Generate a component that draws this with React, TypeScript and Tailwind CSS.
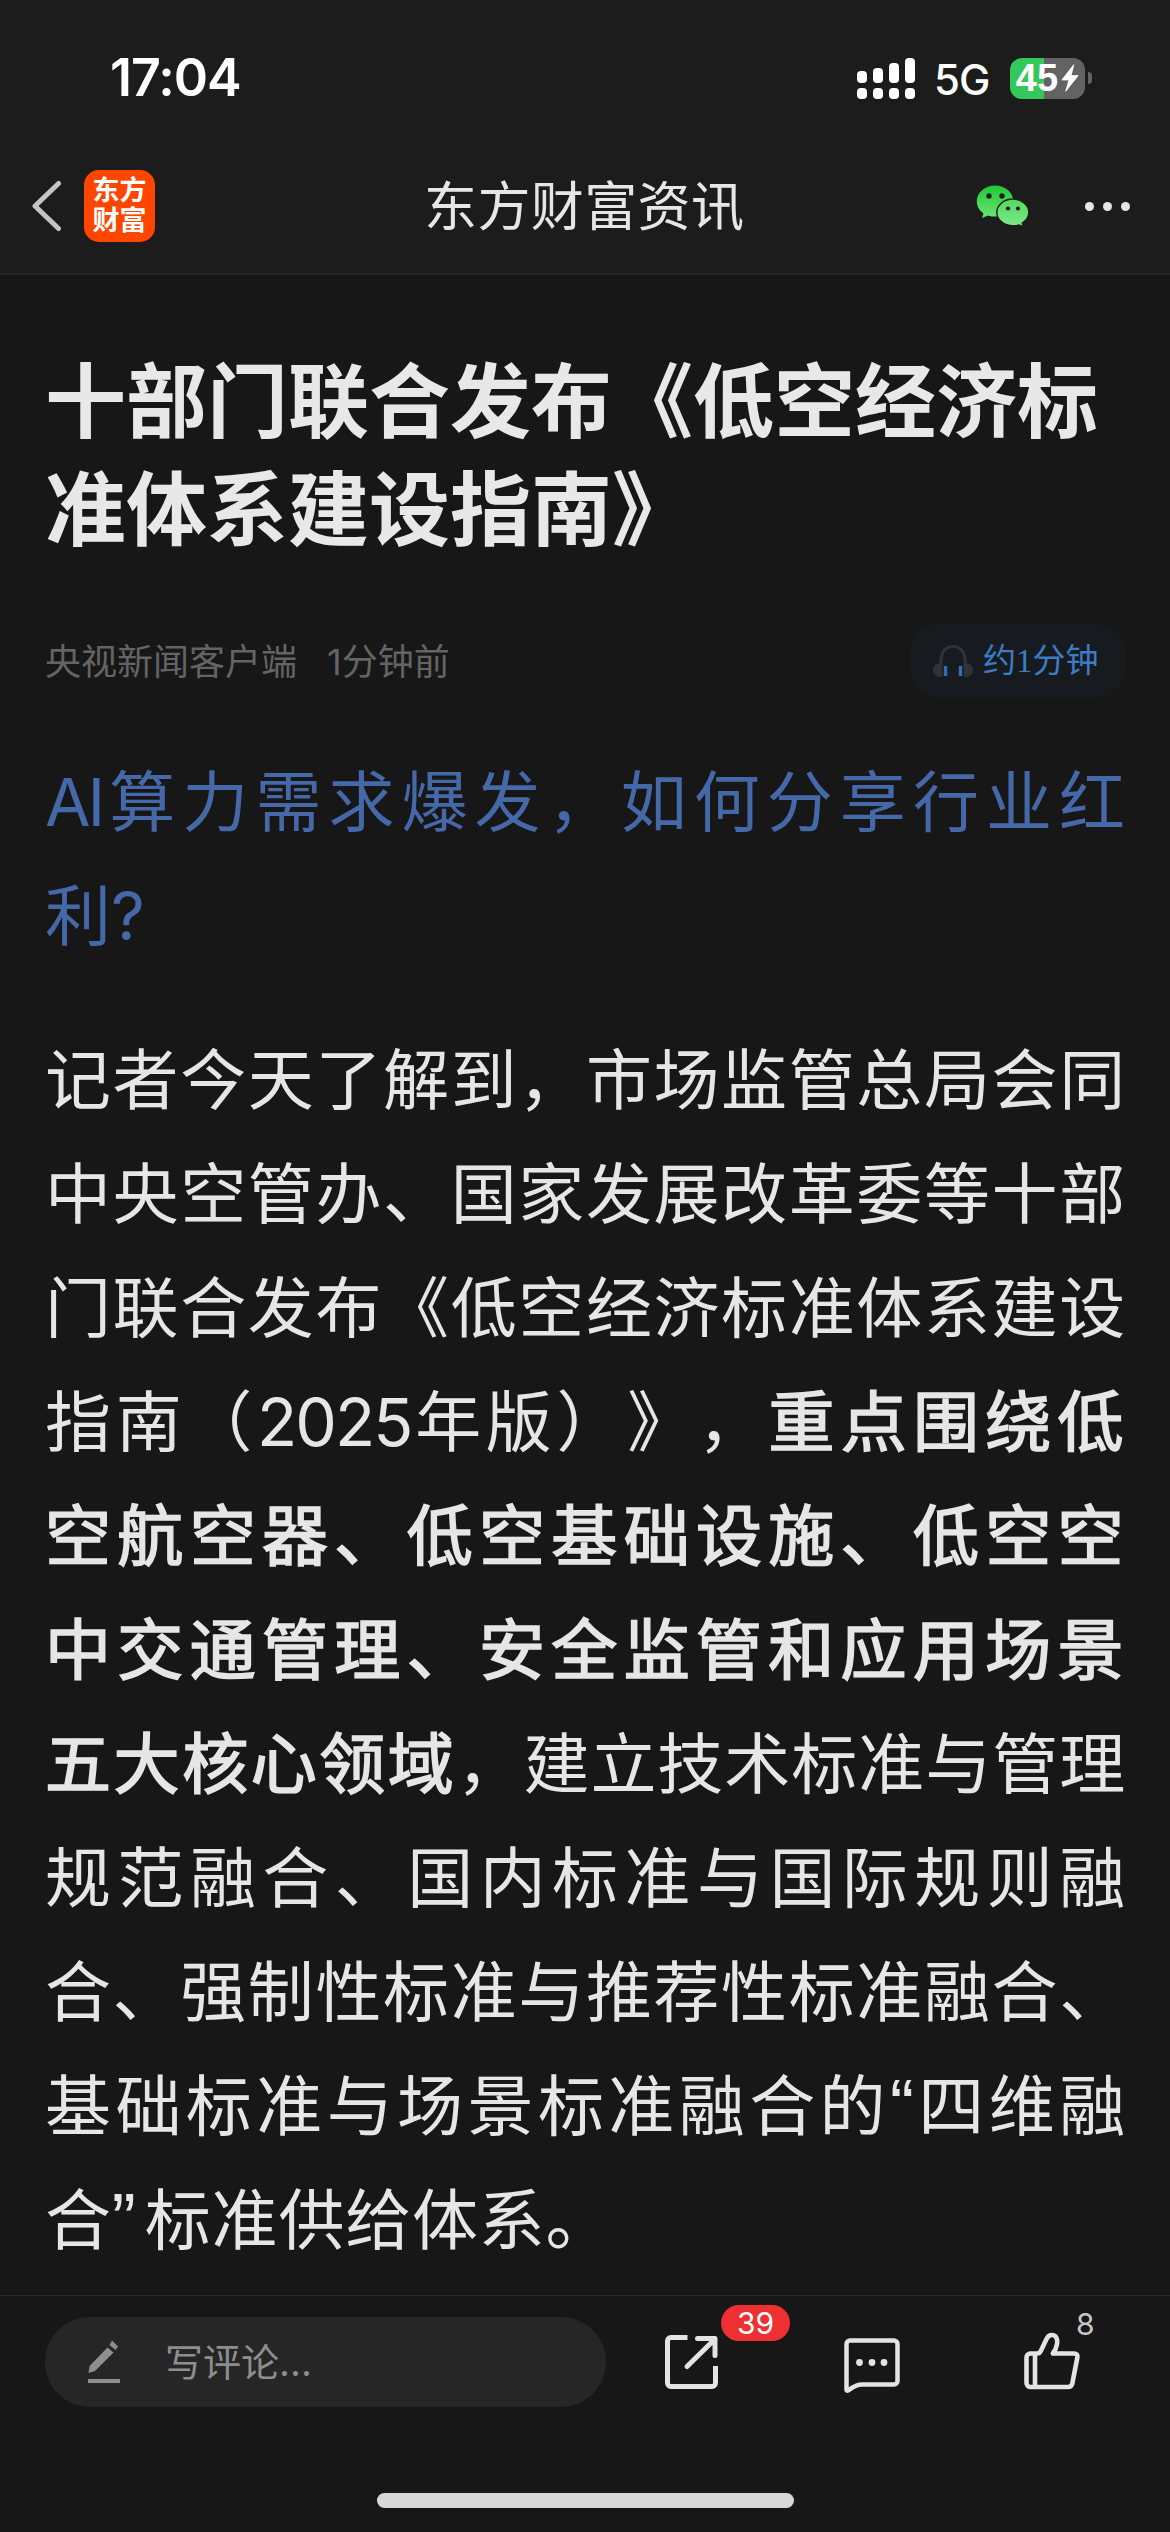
import { clsx } from 'clsx'

const SIGNAL = ['h-3', 'h-[15px]', 'h-5', 'h-[25px]']

type Run = { t: string; b?: boolean; className?: string }

const LEAD: Run[][] = [
  [{ t: 'AI', className: 'tracking-[-3px]' }, { t: '算力需求爆发，如何分享行业红' }],
  [{ t: '利?' }],
]

const QUOTE = "font-['Liberation_Sans','Noto_Sans_CJK_SC',sans-serif] text-[72px] leading-none"

// `b` runs are the emphasised part of the article
const BODY: Run[][] = [
  [{ t: '记者今天了解到，市场监管总局会同' }],
  [{ t: '中央空管办、国家发展改革委等十部' }],
  [{ t: '门联合发布《低空经济标准体系建设' }],
  [{ t: '指南（' }, { t: '2025', className: 'tracking-[-2px]' }, { t: '年版）》，' }, { t: '重点围绕低', b: true }],
  [{ t: '空航空器、低空基础设施、低空空', b: true }],
  [{ t: '中交通管理、安全监管和应用场景', b: true }],
  [{ t: '五大核心领域', b: true }, { t: '，建立技术标准与管理' }],
  [{ t: '规范融合、国内标准与国际规则融' }],
  [{ t: '合、强制性标准与推荐性标准融合、' }],
  [{ t: '基础标准与场景标准融合的' }, { t: '“', className: QUOTE }, { t: '四维融' }],
  [{ t: '合' }, { t: '”', className: clsx(QUOTE, 'tracking-[9px]') }, { t: '标准供给体系。' }],
]

function StatusBar() {
  return (
    <div className="h-[138px] pl-[110px] pr-[78px] pt-[48px] flex items-start justify-between text-white">
      <span className="text-[52px] leading-[60px] font-semibold tracking-[-1px]">17:04</span>
      <div className="flex items-center h-[60px]">
        <div className="flex items-end gap-1.5">
          {SIGNAL.map((h) => (
            <div key={h} className="flex flex-col gap-[5px]">
              <span className={clsx('w-2.5 rounded-[4px] bg-white', h)} />
              <span className="w-2.5 h-[11px] rounded-[4px] bg-white" />
            </div>
          ))}
        </div>
        <span className="ml-[19px] w-[56px] text-[42px] leading-none font-medium tracking-[-1px] pt-[3px]">5G</span>
        <div className="ml-[20px] w-[75px] h-[41px] rounded-[12px] bg-linear-to-r from-[#34c759] from-[46%] to-[#636363] to-[46%] flex items-center justify-center gap-[3px]">
          <span className="text-[38px] leading-[41px] font-bold font-['Liberation_Sans',sans-serif]">45</span>
          <svg width="18" height="30" viewBox="0 0 19 30" fill="white" stroke="white" strokeLinejoin="round">
            <path d="M13.500 1 1 17h7.500L5 29 18 12.500h-7.500z" />
          </svg>
        </div>
        <span className="ml-[3px] w-1 h-3 rounded-r-full bg-[#636363]" />
      </div>
    </div>
  )
}

function WeChatIcon() {
  return (
    <svg width="54" height="42" viewBox="0 0 54 42">
      <defs>
        <linearGradient id="wcBack" x1="0" y1="0" x2="0" y2="1">
          <stop offset="0" stopColor="#20c832" />
          <stop offset="1" stopColor="#6be477" />
        </linearGradient>
        <linearGradient id="wcFront" x1="0" y1="0" x2="0" y2="1">
          <stop offset="0" stopColor="#52d95f" />
          <stop offset="1" stopColor="#7fe888" />
        </linearGradient>
      </defs>
      <path
        d="M19 0.500C8.800 0.500 0.800 7.700 0.800 16.500c0 5 2.600 9 6.700 11.900L6 33l6-2.600c2.200.8 4.600 1.200 7 1.200 10.200 0 18.300-6.800 18.300-15.400S29.200.500 19 .500z"
        fill="url(#wcBack)"
      />
      <circle cx="13" cy="11" r="2.700" fill="#1c1c1c" />
      <circle cx="26" cy="11" r="2.700" fill="#1c1c1c" />
      <path
        d="M37 14c-8.900 0-16.200 6-16.200 13.400s7.200 13.400 16.200 13.400c2.100 0 4.200-.3 6-.9l4.500 2.100-1.200-4c3.600-2.400 6.500-6.200 6.500-10.600C52.800 20 45.700 14 37 14z"
        fill="url(#wcFront)"
        stroke="#1c1c1c"
        strokeWidth="1.400"
      />
      <circle cx="32" cy="23.500" r="2.100" fill="#1c1c1c" />
      <circle cx="42" cy="23.500" r="2.100" fill="#1c1c1c" />
    </svg>
  )
}

function NavBar() {
  return (
    <div className="h-[137px] pl-[31px] pr-[40px] pt-[1px] flex items-center border-b-2 border-[#262626]">
      <svg width="32" height="52" viewBox="0 0 32 52" fill="none" stroke="#c4c4c4" strokeWidth="5" strokeLinecap="round" strokeLinejoin="round">
        <path d="M27.500 3.500 4 26l23.500 22.500" />
      </svg>
      <div className="ml-[21px] w-[71px] h-[72px] rounded-[15px] bg-[#ff4600] flex flex-col items-center justify-center text-white text-[27px] leading-[30px] font-bold">
        <span>东方</span>
        <span>财富</span>
      </div>
      <h1 className="ml-[269px] w-[322px] pt-[2px] text-[53px] leading-none tracking-[0.4px] text-[#e6e6e6]">东方财富资讯</h1>
      <div className="ml-auto flex items-center">
        <WeChatIcon />
        <div className="ml-[55px] flex gap-[9px]">
          <span className="size-[9px] rounded-full bg-[#e6e6e6]" />
          <span className="size-[9px] rounded-full bg-[#e6e6e6]" />
          <span className="size-[9px] rounded-full bg-[#e6e6e6]" />
        </div>
      </div>
    </div>
  )
}

function ListenPill() {
  return (
    <div className="w-[215px] h-[74px] rounded-[28px] bg-[#171b1f] flex items-center pl-[23px]">
      <svg width="40" height="32" viewBox="0 0 40 32" fill="none">
        <path d="M8 22v-7C8 7 13 1.500 20 1.500S32 7 32 15v7" stroke="#303336" strokeWidth="3" />
        <path d="M9 18v14C3.500 32 0 29.500 0 25s3.500-7 9-7zM31 18v14c5.500 0 9-2.500 9-7s-3.500-7-9-7z" fill="#303336" />
        <path d="M12.500 21v10M27.500 21v10" stroke="#2f6db8" strokeWidth="3.500" />
      </svg>
      <span className="ml-[10px] text-[33px] leading-none text-[#3b7cc4] font-['Liberation_Serif','Noto_Sans_CJK_SC',serif]">约1分钟</span>
    </div>
  )
}

function Line({ runs, last }: { runs: Run[]; last: boolean }) {
  return (
    <p className={clsx('h-[114px] whitespace-nowrap', !last && '[text-align-last:justify]')}>
      {runs.map(({ t, b, className }) => (
        <span key={t} className={clsx(b && 'tracking-[2.4px] [-webkit-text-stroke:1.7px_#e6e6e6]', className)}>
          {t}
        </span>
      ))}
    </p>
  )
}

function Article() {
  return (
    <article className="px-[45px] pt-[73px] h-[2020px]">
      <h2 className="text-[81px] leading-[108px] font-bold text-[#e8e8e8] whitespace-nowrap">
        十部门联合发布《低空经济标
        <br />
        准体系建设指南》
      </h2>
      <div className="mt-[60px] h-[74px] flex items-center justify-between text-[36px] text-[#646464]">
        <div className="flex gap-[30px] pt-[2px]">
          <span>央视新闻客户端</span>
          <span>1分钟前</span>
        </div>
        <ListenPill />
      </div>
      <div className="mt-[47px] text-[66px] leading-[114px] text-[#4568a8]">
        {LEAD.map((runs, i) => (
          <Line key={i} runs={runs} last={i === LEAD.length - 1} />
        ))}
      </div>
      <div className="mt-[50px] -mr-px text-[66px] leading-[114px] tracking-[0.8px] text-[#e6e6e6]">
        {BODY.map((runs, i) => (
          <Line key={i} runs={runs} last={i === BODY.length - 1} />
        ))}
      </div>
    </article>
  )
}

function Toolbar() {
  return (
    <div className="h-[237px] border-t border-[#292929] flex flex-col">
      <div className="pl-[45px] pt-[21px] flex items-start">
        <div className="w-[561px] h-[90px] rounded-full bg-[#262626] flex items-center pl-[43px] text-[#8e8e8e]">
          <svg width="32" height="44" viewBox="0 0 32 44" fill="currentColor">
            <path d="M19.500 7.500 25.500 12.500 7 31 0.500 33 1.500 26z" />
            <path d="M24 0.500 30 6.500 27.500 10 21.500 5z" />
            <rect x="0" y="39" width="32" height="4" />
          </svg>
          <span className="ml-[45px] text-[38px] leading-none">写评论...</span>
        </div>
        <div className="relative ml-[59px] mt-[18px]">
          <svg width="54" height="54" viewBox="0 0 54 54" fill="none" stroke="#e4e4e4" strokeWidth="5" strokeLinejoin="round">
            <path d="M22.500 2.500H6a3.500 3.500 0 0 0-3.500 3.500v42A3.500 3.500 0 0 0 6 51.500h41a3.500 3.500 0 0 0 3.500-3.500V31" />
            <path d="M32.500 3.500H50V20.500M49 5 22 31.500" strokeLinecap="round" />
          </svg>
          <span className="absolute left-[56px] -top-[30px] w-[69px] h-[36px] rounded-full bg-[#ee3033] text-white text-[30px] leading-[37px] text-center">
            39
          </span>
        </div>
        <svg className="ml-[125px] mt-[21px]" width="56" height="56" viewBox="0 0 56 56" fill="none" stroke="#e4e4e4" strokeWidth="4.500" strokeLinejoin="round">
          <path d="M6 2.500h44a3.500 3.500 0 0 1 3.500 3.500v37a3.500 3.500 0 0 1-3.500 3.500H18C11 46.500 8 50 4 52.500c-1 .5-1.500 0-1.500-1V6A3.500 3.500 0 0 1 6 2.500z" />
          <g fill="#e4e4e4" stroke="none">
            <circle cx="15.500" cy="24.500" r="3.400" />
            <circle cx="28" cy="24.500" r="3.400" />
            <circle cx="40" cy="24.500" r="3.400" />
          </g>
        </svg>
        <div className="relative ml-[124px] mt-[15px]">
          <svg width="58" height="58" viewBox="0 0 58 58" fill="none" stroke="#e4e4e4" strokeWidth="4.600" strokeLinejoin="round">
            <path d="M6 21.500h7.500c1.600 0 2.400-.8 3.200-2.300L22.500 7c1.200-2.600 3-4 5.300-4 4.300 0 6 4 5.300 8.700-.6 4-2 7-4.300 9.800H50c2.700 0 3.900 1.400 3.400 3.800L48.300 51.500c-.6 2.500-1.700 3.500-4.300 3.500H6.500a4 4 0 0 1-4-4V25.500a4 4 0 0 1 3.500-4z" />
            <path d="M11 21.500V55" />
          </svg>
          <span className="absolute left-[52px] -top-[26px] text-[30px] leading-[36px] text-[#c8c8c8]">8</span>
        </div>
      </div>
      <div className="mt-auto mb-6 mx-auto w-[417px] h-[15px] rounded-full bg-[#d8d8d8]" />
    </div>
  )
}

export default function App() {
  return (
    <div className="w-[1170px] h-[2532px] overflow-hidden bg-[#171717] font-[Inter,'Noto_Sans_CJK_SC',sans-serif] [text-spacing-trim:space-all]" lang="zh-CN">
      <header className="bg-[#1c1c1c]">
        <StatusBar />
        <NavBar />
      </header>
      <Article />
      <Toolbar />
    </div>
  )
}
